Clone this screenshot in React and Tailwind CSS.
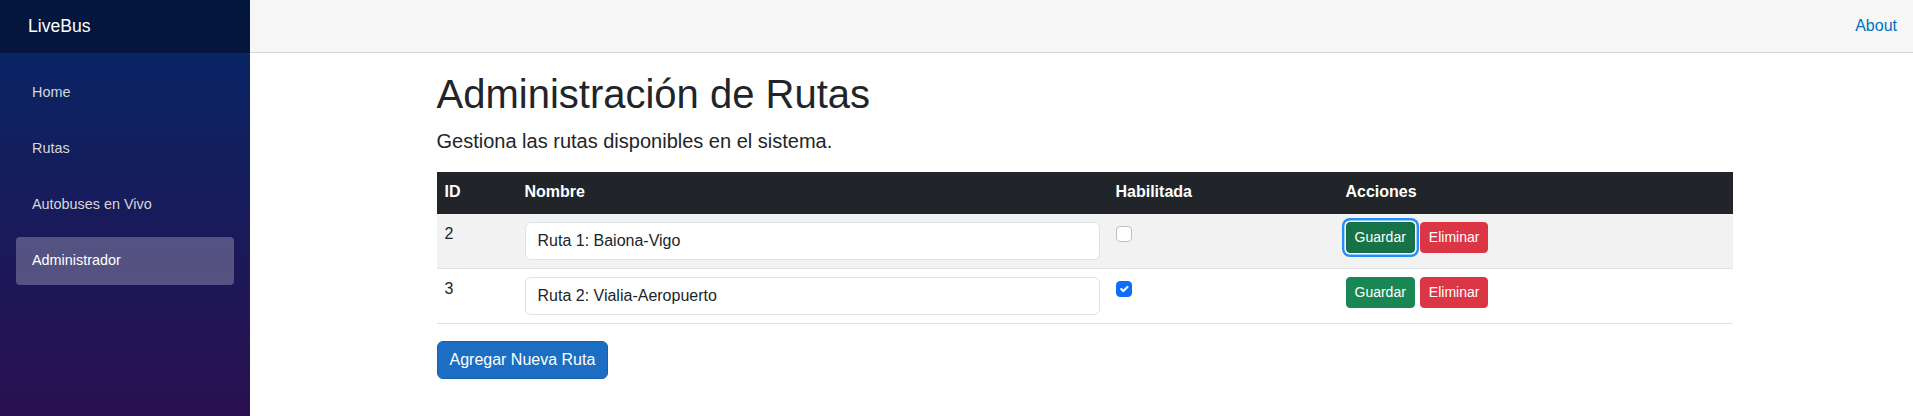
import React from 'react'

const navItems = [
  { label: 'Home' },
  { label: 'Rutas' },
  { label: 'Autobuses en Vivo' },
  { label: 'Administrador', active: true },
]

const rutas = [
  { id: 2, nombre: 'Ruta 1: Baiona-Vigo', habilitada: false, focus: true },
  { id: 3, nombre: 'Ruta 2: Vialia-Aeropuerto', habilitada: true },
]

const Checkbox = ({ checked }) => (
  checked ?
    <span className="mt-[4px] inline-flex h-4 w-4 items-center justify-center rounded-[4px] border border-[#0d6efd] bg-[#0d6efd]">
      <svg viewBox="0 0 20 20" className="h-4 w-4">
        <path d="M6 10l3 3l6-6" fill="none" stroke="#fff" strokeWidth="3" strokeLinecap="round" strokeLinejoin="round" />
      </svg>
    </span>
    :
    <span className="mt-[4px] inline-block h-4 w-4 rounded-[4px] border border-[#bfbfbf] bg-white"></span>
)

const App = () => {
  return (
    <div className="flex h-screen w-full overflow-hidden bg-white text-[16px] text-[#212529]" style={{ fontFamily: '"Liberation Sans", Arial, sans-serif' }}>
      {/* Sidebar */}
      <div className="flex h-screen w-[250px] shrink-0 flex-col bg-[linear-gradient(180deg,#052767_0%,#2a1050_100%)]">
        <div className="flex h-[53px] items-center bg-[rgba(0,0,0,0.4)] pl-[28px]">
          <span className="text-[17.6px] text-white">LiveBus</span>
        </div>
        <nav className="flex flex-col px-4 pt-4">
          {navItems.map((item) => (
            <div key={item.label} className="pb-2">
              <a
                href="#"
                className={
                  item.active
                    ? 'flex h-12 items-center rounded-[4px] bg-[rgba(255,255,255,0.25)] px-4 text-[14.4px] text-white'
                    : 'flex h-12 items-center rounded-[4px] px-4 text-[14.4px] text-[#d7d7d7]'
                }
              >
                {item.label}
              </a>
            </div>
          ))}
        </nav>
      </div>

      {/* Main */}
      <div className="flex min-w-0 flex-1 flex-col">
        <div className="flex h-[53px] shrink-0 items-center justify-end border-b border-[#d6d5d5] bg-[#f7f7f7] pr-4">
          <a href="#" className="text-[16px] text-[#0071c1]">About</a>
        </div>
        <div className="pl-[30px] pr-6 pt-[17px]">
          <div className="mx-auto max-w-[1320px] px-3">
            <h1 className="mb-2 text-[40px] font-normal leading-[1.2]">Administración de Rutas</h1>
            <p className="mb-4 text-[20px] leading-[1.5]">Gestiona las rutas disponibles en el sistema.</p>

            <table className="mb-[17px] w-full table-fixed border-collapse">
              <colgroup>
                <col className="w-[80px]" />
                <col className="w-[591px]" />
                <col className="w-[230px]" />
                <col />
              </colgroup>
              <thead>
                <tr className="bg-[#212529] text-left text-white">
                  <th className="border-b-2 border-[#212529] p-2 font-bold leading-6">ID</th>
                  <th className="border-b-2 border-[#212529] p-2 font-bold leading-6">Nombre</th>
                  <th className="border-b-2 border-[#212529] p-2 font-bold leading-6">Habilitada</th>
                  <th className="border-b-2 border-[#212529] p-2 font-bold leading-6">Acciones</th>
                </tr>
              </thead>
              <tbody>
                {rutas.map((ruta, index) => (
                  <tr key={ruta.id} className={index % 2 === 0 ? 'bg-[#f2f2f2]' : 'bg-white'}>
                    <td className="border-b border-[#dee2e6] p-2 align-top leading-6">{ruta.id}</td>
                    <td className="border-b border-[#dee2e6] p-2 align-top">
                      <input
                        type="text"
                        defaultValue={ruta.nombre}
                        className="block h-[38px] w-full rounded-[6px] border border-[#dee2e6] bg-white px-3 text-[16px] text-[#212529] outline-none"
                      />
                    </td>
                    <td className="border-b border-[#dee2e6] p-2 align-top leading-6">
                      <Checkbox checked={ruta.habilitada} />
                    </td>
                    <td className="border-b border-[#dee2e6] p-2 align-top">
                      <div className="flex gap-[5px]">
                        <button
                          className={
                            ruta.focus
                              ? 'h-[31px] rounded-[4px] border border-[#146c43] bg-[#157347] px-2 text-[14px] text-white shadow-[0_0_0_1.6px_#fff,0_0_0_4px_#258cfb]'
                              : 'h-[31px] rounded-[4px] border border-[#198754] bg-[#198754] px-2 text-[14px] text-white'
                          }
                        >
                          Guardar
                        </button>
                        <button className="h-[31px] rounded-[4px] border border-[#dc3545] bg-[#dc3545] px-2 text-[14px] text-white">
                          Eliminar
                        </button>
                      </div>
                    </td>
                  </tr>
                ))}
              </tbody>
            </table>

            <button className="h-[38px] rounded-[6px] border border-[#1861ac] bg-[#1b6ec2] px-3 text-[16px] text-white">
              Agregar Nueva Ruta
            </button>
          </div>
        </div>
      </div>
    </div>
  )
}

export default App
